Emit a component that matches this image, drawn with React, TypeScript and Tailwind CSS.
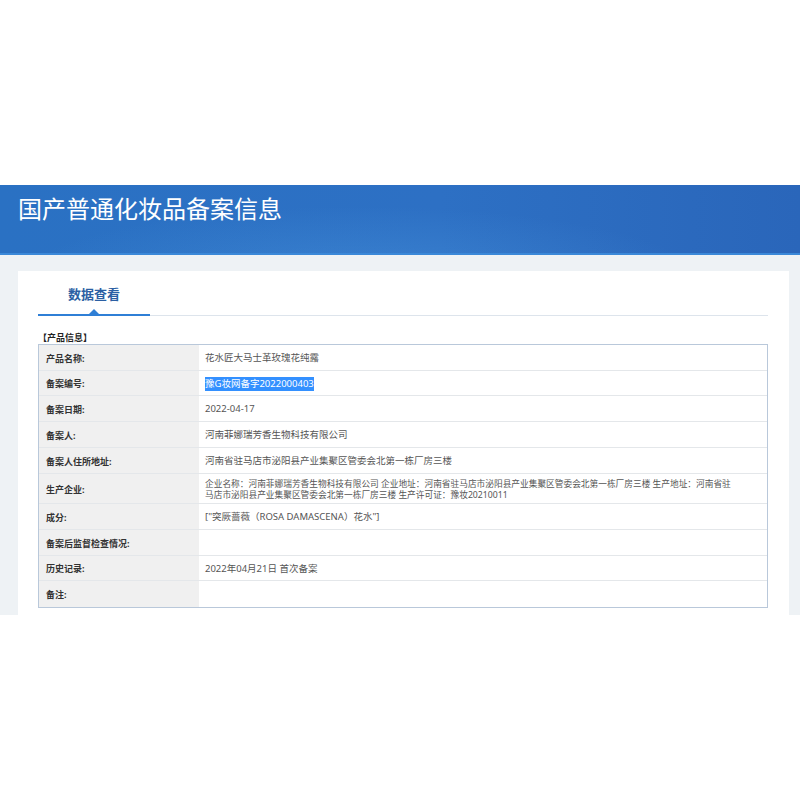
import React from 'react';

type Row = { label: string; value?: React.ReactNode; h: string };

const rows: Row[] = [
  { label: '产品名称:', value: '花水匠大马士革玫瑰花纯露', h: 'h-[26px]' },
  {
    label: '备案编号:',
    value: <span className="bg-[#3390ff] text-white">豫G妆网备字2022000403</span>,
    h: 'h-[25px]',
  },
  { label: '备案日期:', value: '2022-04-17', h: 'h-[26px]' },
  { label: '备案人:', value: '河南菲娜瑞芳香生物科技有限公司', h: 'h-[26px]' },
  { label: '备案人住所地址:', value: '河南省驻马店市泌阳县产业集聚区管委会北第一栋厂房三楼', h: 'h-[26px]' },
  {
    label: '生产企业:',
    value: (
      <span className="block text-[8.7px] leading-[11px]">
        企业名称：河南菲娜瑞芳香生物科技有限公司 企业地址：河南省驻马店市泌阳县产业集聚区管委会北第一栋厂房三楼 生产地址：河南省驻
        <br />
        马店市泌阳县产业集聚区管委会北第一栋厂房三楼 生产许可证：豫妆20210011
      </span>
    ),
    h: 'h-[30px]',
  },
  { label: '成分:', value: '["突厥蔷薇（ROSA DAMASCENA）花水"]', h: 'h-[26px]' },
  { label: '备案后监督检查情况:', h: 'h-[26px]' },
  { label: '历史记录:', value: '2022年04月21日 首次备案', h: 'h-[25px]' },
  { label: '备注:', h: 'h-[26px]' },
];

export default function App() {
  return (
    <div
      className="w-[800px] h-[800px] bg-white overflow-hidden"
      style={{ fontFamily: '"Noto Sans", "Noto Sans CJK SC", sans-serif' }}
    >
      <div className="h-[185px]" />

      {/* Banner */}
      <div className="h-[70px] px-[18px] pt-[7px] border-b-2 border-[#3a88d8] bg-[radial-gradient(ellipse_at_45%_140%,rgba(90,170,235,0.3),transparent_55%),linear-gradient(90deg,#2a71c3,#2d70c4_55%,#2a66ba)]">
        <h1
          className="text-[24px] leading-[32px] font-normal text-white"
          style={{ fontFamily: '"Noto Sans CJK SC", sans-serif' }}
        >
          国产普通化妆品备案信息
        </h1>
      </div>

      {/* Content */}
      <div className="h-[360px] bg-[#eef2f5] pl-[18px] pr-[11px] pt-[16px]">
        <div className="h-full bg-white pl-[20px] pr-[21px]">
          {/* Tabs */}
          <div className="flex h-[45px] border-b border-[#dde4ec]">
            <div className="relative -mb-px w-[112px] border-b-2 border-[#2f7fd6] flex items-center justify-center pt-[5px]">
              <span className="text-[13px] font-semibold text-[#2b5fa3]">数据查看</span>
              <span className="absolute bottom-0 left-1/2 -translate-x-1/2 w-0 h-0 border-l-[5px] border-r-[5px] border-b-[5px] border-l-transparent border-r-transparent border-b-[#2f7fd6]" />
            </div>
          </div>

          <div className="mt-[16px] h-[12px] leading-[12px] text-[9px] font-bold text-[#222]">【产品信息】</div>

          {/* Table */}
          <div className="border border-[#b9c8da]">
            {rows.map((r, i) => (
              <div
                key={r.label}
                className={`flex ${r.h} ${i < rows.length - 1 ? 'border-b border-[#e4e7ea]' : ''}`}
              >
                <div className="w-[160px] shrink-0 bg-[#f0f0f0] pl-[7px] pt-[2px] flex items-center text-[9px] font-bold text-[#333]">
                  {r.label}
                </div>
                <div className="flex-1 pl-[6px] pt-[2px] flex items-center text-[9.5px] text-[#555] whitespace-nowrap">
                  {r.value}
                </div>
              </div>
            ))}
          </div>
        </div>
      </div>
    </div>
  );
}
